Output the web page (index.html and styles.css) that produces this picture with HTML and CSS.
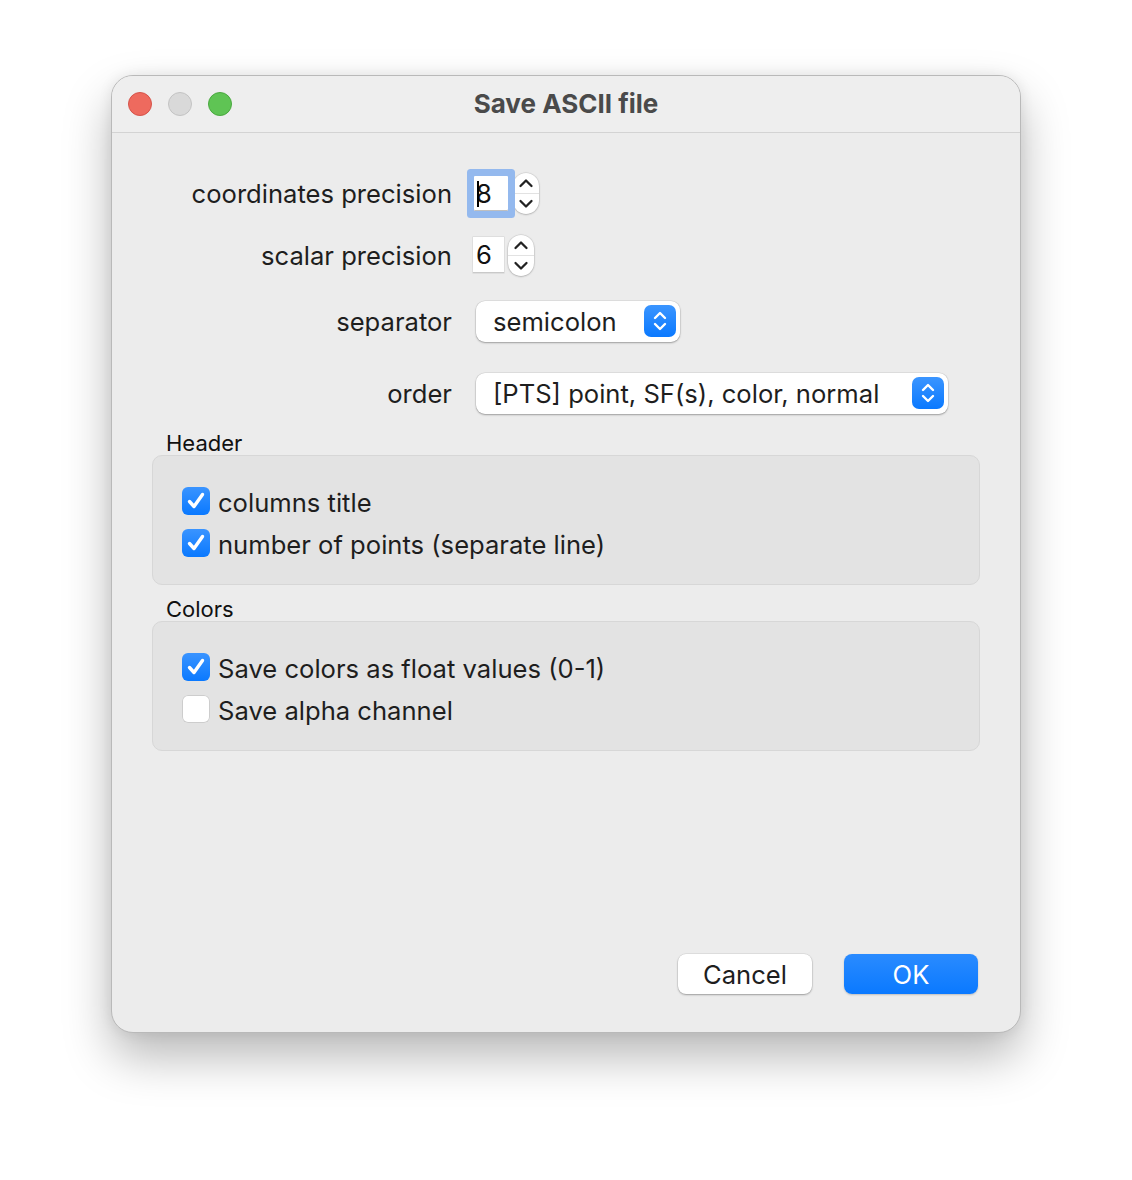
FILE: index.html
```html
<!DOCTYPE html>
<html>
<head>
<meta charset="utf-8">
<link rel="stylesheet" href="styles.css">
</head>
<body>
<div class="window">
  <div class="titlebar">
    <div class="lights">
      <span class="light red"></span>
      <span class="light gray"></span>
      <span class="light green"></span>
    </div>
    <div class="title">Save ASCII file</div>
  </div>
  <div class="content">
    <div class="form">
      <div class="row r1">
        <div class="label">coordinates precision</div>
        <div class="spin focus">
          <div class="field focused"><span class="caret"></span>8</div>
          <div class="stepper">
            <svg width="16" height="10" viewBox="0 0 16 10"><path d="M2.5 8 L8 2.5 L13.5 8" fill="none" stroke="#222" stroke-width="2.3" stroke-linecap="round" stroke-linejoin="round"/></svg>
            <span class="sdiv"></span>
            <svg width="16" height="10" viewBox="0 0 16 10"><path d="M2.5 2 L8 7.5 L13.5 2" fill="none" stroke="#222" stroke-width="2.3" stroke-linecap="round" stroke-linejoin="round"/></svg>
          </div>
        </div>
      </div>
      <div class="row r2">
        <div class="label">scalar precision</div>
        <div class="spin">
          <div class="field small">6</div>
          <div class="stepper">
            <svg width="16" height="10" viewBox="0 0 16 10"><path d="M2.5 8 L8 2.5 L13.5 8" fill="none" stroke="#222" stroke-width="2.3" stroke-linecap="round" stroke-linejoin="round"/></svg>
            <span class="sdiv"></span>
            <svg width="16" height="10" viewBox="0 0 16 10"><path d="M2.5 2 L8 7.5 L13.5 2" fill="none" stroke="#222" stroke-width="2.3" stroke-linecap="round" stroke-linejoin="round"/></svg>
          </div>
        </div>
      </div>
      <div class="row r3">
        <div class="label">separator</div>
        <div class="popup sep">
          <span class="ptext">semicolon</span>
          <span class="pbtn">
            <svg width="16" height="24" viewBox="0 0 16 24"><path d="M3 9 L8 4 L13 9 M3 15 L8 20 L13 15" fill="none" stroke="#fff" stroke-width="2.4" stroke-linecap="round" stroke-linejoin="round"/></svg>
          </span>
        </div>
      </div>
      <div class="row r4">
        <div class="label">order</div>
        <div class="popup ord">
          <span class="ptext">[PTS] point, SF(s), color, normal</span>
          <span class="pbtn">
            <svg width="16" height="24" viewBox="0 0 16 24"><path d="M3 9 L8 4 L13 9 M3 15 L8 20 L13 15" fill="none" stroke="#fff" stroke-width="2.4" stroke-linecap="round" stroke-linejoin="round"/></svg>
          </span>
        </div>
      </div>
    </div>

    <div class="group-title">Header</div>
    <div class="group">
      <div class="check">
        <span class="box on"><svg width="22" height="20" viewBox="0 0 22 20"><path d="M4.5 10.5 L9 15.5 L17.5 3.5" fill="none" stroke="#fff" stroke-width="3.4" stroke-linecap="round" stroke-linejoin="round"/></svg></span>
        <span class="ctext">columns title</span>
      </div>
      <div class="check">
        <span class="box on"><svg width="22" height="20" viewBox="0 0 22 20"><path d="M4.5 10.5 L9 15.5 L17.5 3.5" fill="none" stroke="#fff" stroke-width="3.4" stroke-linecap="round" stroke-linejoin="round"/></svg></span>
        <span class="ctext">number of points (separate line)</span>
      </div>
    </div>

    <div class="group-title second">Colors</div>
    <div class="group">
      <div class="check">
        <span class="box on"><svg width="22" height="20" viewBox="0 0 22 20"><path d="M4.5 10.5 L9 15.5 L17.5 3.5" fill="none" stroke="#fff" stroke-width="3.4" stroke-linecap="round" stroke-linejoin="round"/></svg></span>
        <span class="ctext">Save colors as float values (0-1)</span>
      </div>
      <div class="check">
        <span class="box off"></span>
        <span class="ctext">Save alpha channel</span>
      </div>
    </div>

    <div class="buttons">
      <div class="btn cancel">Cancel</div>
      <div class="btn ok">OK</div>
    </div>
  </div>
</div>
</body>
</html>
```
FILE: styles.css
```css
* { box-sizing: border-box; }
html, body { margin: 0; padding: 0; background: #ffffff; }
body {
  font-family: Inter, "Liberation Sans", sans-serif;
  color: #1f1f1f;
  padding-top: 75px;
  height: 1180px;
}
.window {
  margin-left: 111px;
  width: 910px;
  height: 958px;
  background: #ececec;
  border: 1px solid #b9b9b9;
  border-radius: 22px;
  box-shadow: 0 24px 48px rgba(0,0,0,0.28), 0 0 14px rgba(0,0,0,0.08);
  overflow: hidden;
  display: flex;
  flex-direction: column;
}
.titlebar {
  height: 57px;
  flex: none;
  background: #eeeeee;
  border-bottom: 1px solid #d3d3d3;
  display: flex;
  align-items: center;
  position: relative;
}
.lights { display: flex; gap: 16px; padding-left: 16px; }
.light {
  width: 24px; height: 24px; border-radius: 50%;
  display: block;
}
.light.red { background: #ee6a5e; border: 1px solid #d5534a; }
.light.gray { background: #d9d9d9; border: 1px solid #c3c3c3; }
.light.green { background: #5fc454; border: 1px solid #4aa83f; }
.title {
  position: absolute;
  left: 0; right: 0; top: 0; bottom: 1px;
  display: flex; align-items: center; justify-content: center;
  font-weight: 700;
  font-size: 26px;
  color: #4a4a4a;
  pointer-events: none;
}
.content {
  flex: 1;
  display: flex;
  flex-direction: column;
  padding: 35px 40px 38px 40px;
}
.form { display: flex; flex-direction: column; }
.row {
  display: grid;
  grid-template-columns: 300px auto;
  column-gap: 21px;
  align-items: center;
  height: 50px;
}
.r2 { margin-top: 12px; }
.r3 { margin-top: 16px; }
.r4 { margin-top: 22px; }
.label {
  text-align: right;
  font-size: 25.6px;
  color: #1e1e1e;
  white-space: nowrap;
}
.spin { display: flex; align-items: center; justify-self: start; }
.field {
  background: #fff;
  width: 32px;
  height: 35px;
  font-size: 25.6px;
  line-height: 35px;
  padding-left: 3px;
  color: #111;
  box-shadow: inset 0 -1px 0 #c9c9c9, 0 0 0 0.5px #d0d0d0;
  position: relative;
}
.spin.focus { margin-left: -6px; }
.field.focused {
  width: 34px;
  box-shadow: 0 0 0 7px #94b9ee, inset 0 -1px 0 #bfbfbf;
  border-radius: 1px;
  margin: 0 5px 0 7px;
  padding-left: 2px;
}
.caret {
  position: absolute;
  left: 3px; top: 5px;
  width: 2px; height: 26px;
  background: #000;
}
.field.small { width: 31px; height: 36px; }
.stepper {
  width: 26px;
  height: 41px;
  margin-left: 4px;
  background: #fff;
  border-radius: 13px;
  box-shadow: 0 0.5px 2px rgba(0,0,0,0.3), 0 0 0 0.5px rgba(0,0,0,0.08);
  display: flex;
  flex-direction: column;
  align-items: center;
  justify-content: space-evenly;
}
.focus .stepper { margin-left: 0; }
.sdiv { width: 100%; height: 1px; background: #e2e2e2; }
.popup {
  justify-self: start;
  background: #fff;
  border-radius: 9px;
  height: 41px;
  box-shadow: 0 1px 2px rgba(0,0,0,0.3), 0 0 0 0.5px rgba(0,0,0,0.1);
  display: flex;
  align-items: center;
  padding: 0 4px 0 17px;
  font-size: 25.6px;
  color: #1e1e1e;
  margin-left: 3px;
}
.popup.sep { width: 204px; }
.popup.ord { width: 472px; }
.ptext { flex: 1; white-space: nowrap; }
.pbtn {
  width: 32px; height: 32px;
  border-radius: 7px;
  background: linear-gradient(#3b95ff, #0a79ff);
  display: flex; align-items: center; justify-content: center;
}
.group-title {
  font-size: 22px;
  color: #111;
  margin-top: 12px;
  margin-left: 14px;
  height: 26px;
  line-height: 26px;
}
.group-title.second { margin-top: 11px; }
.group {
  margin-top: -1px;
  background: #e3e3e3;
  border: 1px solid #d7d7d7;
  border-radius: 10px;
  height: 130px;
  padding: 31px 0 0 29px;
  display: flex;
  flex-direction: column;
  gap: 14px;
}
.check { display: flex; align-items: center; gap: 8px; height: 28px; }
.box {
  width: 28px; height: 28px;
  border-radius: 6px;
  display: flex; align-items: center; justify-content: center;
  flex: none;
}
.box.on { background: linear-gradient(#3a94ff, #0a79ff); }
.box.off { background: #fff; box-shadow: inset 0 0 0 1px #cdcdcd; }
.ctext { font-size: 25.6px; color: #1e1e1e; white-space: nowrap; position: relative; top: 1px; }
.buttons {
  margin-top: auto;
  display: flex;
  justify-content: flex-end;
  gap: 32px;
  padding-right: 2px;
}
.btn {
  width: 134px; height: 40px;
  border-radius: 8px;
  display: flex; align-items: center; justify-content: center;
  font-size: 25.6px;
}
.btn.cancel {
  background: #fff;
  color: #1e1e1e;
  box-shadow: 0 1px 2px rgba(0,0,0,0.3), 0 0 0 0.5px rgba(0,0,0,0.1);
}
.btn.ok {
  background: linear-gradient(#2a8bff, #0a79ff);
  color: #fff;
  box-shadow: 0 1px 2px rgba(0,0,0,0.2);
}
```
